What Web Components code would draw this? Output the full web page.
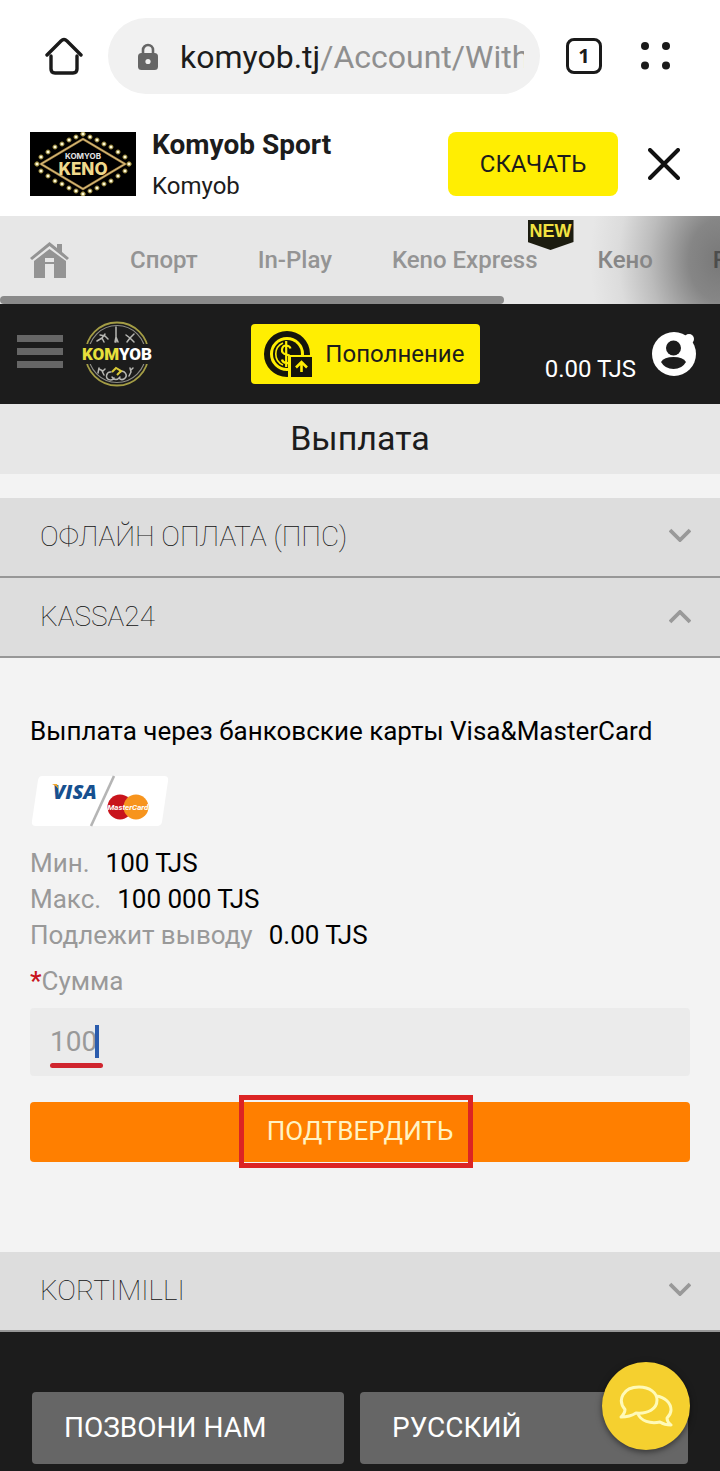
<!DOCTYPE html>
<html lang="ru">
<head>
<meta charset="utf-8">
<meta name="viewport" content="width=device-width, initial-scale=1">
<title>Выплата – Komyob</title>
<style>
  html, body { margin: 0; }
  body { background: #f3f3f3; color: #1c1c1c; font-family: Roboto, "Liberation Sans", sans-serif; }
</style>
</head>
<body>
<komyob-page></komyob-page>

<script>
  const reset = `
    * { box-sizing: border-box; }
    button { font: inherit; color: inherit; background: none; border: 0; margin: 0; padding: 0; cursor: pointer; }
    a { color: inherit; text-decoration: none; }
    svg { display: block; flex: none; }
  `;

  function define(name, css, html, setup) {
    const template = document.createElement('template');
    template.innerHTML = `<style>${reset}${css}</style>${html}`;
    customElements.define(name, class extends HTMLElement {
      constructor() {
        super();
        this.attachShadow({ mode: 'open' }).append(template.content.cloneNode(true));
      }
      connectedCallback() { if (setup) setup(this, this.shadowRoot); }
    });
  }

  /* Browser toolbar */
  define('browser-bar', `
    :host { display: flex; align-items: center; padding: 18px 44px 22px; background: #fff; }
    .url { flex: 1; min-width: 0; height: 76px; margin: 0 26px 0 24px; padding: 2px 16px 0 30px; border-radius: 38px;
           background: #f1f1f1; display: flex; align-items: center; gap: 22px; font-size: 32px; line-height: 40px; }
    .address { overflow: hidden; white-space: nowrap; text-align: left; flex: 1; }
    .path { color: #8f8f8f; }
    .tabs { width: 36px; height: 36px; border: 3px solid #1a1a1a; border-radius: 8px; font: 700 20px/30px "Noto Sans", sans-serif; text-align: center; }
    .menu { margin-left: 38px; }
  `, `
    <button aria-label="Домой"><svg width="40" height="40" viewBox="0 0 40 40" fill="none" stroke="#1a1a1a" stroke-width="3.4" stroke-linecap="round" stroke-linejoin="round"><path d="M3 19 17 5q3-3 6 0l14 14"/><path d="M7 20v13q0 4 4 4h18q4 0 4-4V20"/></svg></button>
    <button class="url">
      <svg width="20" height="28" viewBox="0 0 20 28"><path d="M5 12V7a5 5 0 0 1 10 0v5" fill="none" stroke="#666" stroke-width="2.6"/><rect y="10" width="20" height="17" rx="3.5" fill="#666"/><circle cx="10" cy="18.500" r="2.600" fill="#f1f1f1"/></svg>
      <span class="address">komyob.tj<span class="path">/Account/With</span></span>
    </button>
    <button class="tabs" aria-label="Вкладки">1</button>
    <button class="menu" aria-label="Меню"><svg width="36" height="32" viewBox="0 0 36 32" fill="#1a1a1a"><circle cx="5" cy="6" r="4"/><circle cx="26" cy="6" r="4"/><circle cx="5" cy="25.500" r="4"/><circle cx="26" cy="25.500" r="4"/></svg></button>
  `);

  /* Neon sign of the Keno game */
  define('keno-logo', `:host { display: block; }`, `
    <svg width="106" height="64" viewBox="0 0 106 64">
      <rect width="106" height="64" fill="#000"/>
      <path d="M53 7 95 32 53 57 11 32Z" fill="none" stroke="#a8874a" stroke-width="2.600" stroke-linejoin="round"/>
      <path d="M53 7 95 32 53 57 11 32Z" fill="none" stroke="#dcc07c" stroke-width="1" stroke-linejoin="round"/>
      <g id="bulbs" fill="#fffbd8" stroke="#857428" stroke-width="1"></g>
      <text x="53" y="27" text-anchor="middle" font-family="Inter, sans-serif" font-weight="700" font-size="8" fill="#e4e4e4">KOMYOB</text>
      <text x="53" y="43" text-anchor="middle" font-family="Inter, sans-serif" font-weight="800" font-size="17" fill="#f0d98c">KENO</text>
    </svg>
  `, (host, root) => {
    const group = root.getElementById('bulbs');
    const bulb = (x, y) => {
      const dot = document.createElementNS('http://www.w3.org/2000/svg', 'circle');
      dot.setAttribute('cx', x); dot.setAttribute('cy', y); dot.setAttribute('r', 2.1);
      group.append(dot);
    };
    const arm = [[0, 2], [7, 5], [14, 8], [21, 12], [28, 15], [35, 20], [42, 25], [46, 32]];
    for (const [dx, y] of arm) for (const side of [-1, 1]) { bulb(53 + side * dx, y); bulb(53 + side * dx, 64 - y); }
  });

  /* Install banner of the mobile app */
  define('app-banner', `
    :host { display: flex; align-items: center; padding: 12px 40px 16px 30px; background: #fff; }
    .text { flex: 1; margin-left: 16px; min-width: 0; }
    strong, span { display: block; }
    strong { font-size: 28px; line-height: 34px; font-weight: 700; }
    span { font-size: 24px; line-height: 28px; margin-top: 10px; }
    .get { width: 170px; height: 64px; border-radius: 8px; background: #ffee02; font-size: 24px; }
    .close { margin-left: 30px; }
  `, `
    <keno-logo></keno-logo>
    <div class="text"><strong>Komyob Sport</strong><span>Komyob</span></div>
    <button class="get">СКАЧАТЬ</button>
    <button class="close" aria-label="Закрыть"><svg width="32" height="32" viewBox="0 0 32 32" stroke="#111" stroke-width="4" stroke-linecap="round"><path d="M2 2 30 30M30 2 2 30"/></svg></button>
  `);

  /* Horizontally scrolled sections */
  define('section-nav', `
    :host { display: block; position: relative; overflow: hidden; color: #949494;
            background: radial-gradient(ellipse 130px 170px at 100% 50%, #787878 0, #868686 24%, #bcbcbc 54%, #dcdcdc 78%, #e7e7e7 100%) #e7e7e7; }
    nav { display: flex; align-items: center; gap: 60px; height: 80px; padding: 8px 30px 0; white-space: nowrap; font-size: 24px; line-height: 32px; font-weight: 500; }
    a { flex: none; position: relative; }
    .shaded { color: #868686; }
    .dark { color: #4c4c4c; }
    .badge { position: absolute; right: -36px; top: -24px; width: 46px; height: 30px; background: #1c1c10; color: #f3e341;
             clip-path: polygon(0 0, 100% 0, 100% 73%, 50% 100%, 0 73%); font: 700 18px/23px "Liberation Sans", sans-serif; text-align: center; }
    .track { height: 8px; }
    .thumb { width: 70%; height: 8px; background: #8a8a8a; border-radius: 4px; }
  `, `
    <nav>
      <a href="#home" aria-label="Главная"><svg width="40" height="36" viewBox="0 0 40 36" fill="#949494"><path d="M0 16 19.500 0 27 6V2h5v8l7 6-2 2L19.500 4 2 18Z"/><path d="M4 19 19.500 7 36 19v17H24V16h-9v20H4ZM15 20h9v2h-9Z"/></svg></a>
      <a href="#sport">Спорт</a>
      <a href="#inplay">In-Play</a>
      <a href="#express">Keno Express<span class="badge">NEW</span></a>
      <a href="#keno" class="shaded">Кено</a>
      <a href="#fast" class="dark">F</a>
    </nav>
    <div class="track"><div class="thumb"></div></div>
  `);

  /* Round emblem with athletes around the name */
  define('komyob-logo', `:host { display: block; }`, `
    <svg width="72" height="66" viewBox="0 0 72 66">
      <circle cx="36" cy="33" r="31.500" fill="none" stroke="#a49d45" stroke-width="1.800"/>
      <circle cx="36" cy="33" r="28.500" fill="none" stroke="#8d8d87" stroke-width="1.200"/>
      <g fill="none" stroke="#b7b7b3" stroke-width="1.500" stroke-linecap="round" stroke-linejoin="round">
        <path d="m16 20 5-3 3-4M19 14l5 1 3 3M21 17l2 4M35 6v9M35 11v10M34 21l1-5 2 5M45 14l4 3 4-4M49 17l-3 4M49 17l4 4"/>
        <path d="m18 47-1 5M18 48l4 2 2-2M21 50l2 4M49 47l1 4-2 4M50 49l2-2"/>
        <path d="M30 51a4 4 0 1 0 3 6M39 51a4 4 0 1 1-1 6M31 56q4 5 8 0"/>
      </g>
      <path d="m31 51 4-4 5 3-4 4" fill="none" stroke="#d8c936" stroke-width="2"/>
      <rect x="1" y="23" width="70" height="20" fill="#1c1c1c"/>
      <text x="36" y="39" text-anchor="middle" font-family="Roboto, sans-serif" font-weight="900" font-size="17" fill="#e7e03c">KOM<tspan fill="#fff">YOB</tspan></text>
    </svg>
  `);

  /* Site header with the account balance */
  define('site-header', `
    :host { display: flex; align-items: center; height: 100px; padding: 0 24px 0 17px; background: #1c1c1c; color: #fff; }
    .menu { display: grid; gap: 6px; width: 46px; margin-top: -6px; }
    .menu i { height: 7px; background: #666; }
    komyob-logo { margin: 0 auto 0 18px; }
    .deposit { display: flex; align-items: center; gap: 12px; height: 60px; margin-left: 34px; padding: 0 16px 0 12px; border-radius: 4px;
               background: #ffee02; color: #1c1c1c; font-size: 24px; }
    .balance { margin: 30px 16px 0 auto; font-size: 24px; line-height: 32px; }
  `, `
    <button class="menu" aria-label="Меню"><i></i><i></i><i></i></button>
    <komyob-logo></komyob-logo>
    <button class="deposit">
      <svg width="50" height="48" viewBox="0 0 50 48"><circle cx="24" cy="24" r="20" fill="none" stroke="#15150c" stroke-width="6"/><circle cx="24" cy="24" r="14" fill="#15150c"/><path d="M20 13a12 12 0 0 0 0 22" fill="none" stroke="#ffee02" stroke-width="1.600"/><path d="M27.500 18.500q-1-3-4.500-3t-4 4 4.500 5 4.500 5-4.500 3.500-4.500-3.500M23.200 11v26" fill="none" stroke="#ffee02" stroke-width="2.200"/><path d="M25 25H50V48H25Z" fill="#ffee02"/><rect x="28" y="27" width="21" height="20" fill="#15150c"/><path d="M38.500 42v-9M33 37.500l5.500-5.500 5.500 5.500" fill="none" stroke="#ffee02" stroke-width="2.600"/></svg>
      Пополнение
    </button>
    <span class="balance">0.00 TJS</span>
    <button aria-label="Профиль"><svg width="44" height="44" viewBox="0 0 44 44"><circle cx="22" cy="22" r="22" fill="#fff"/><circle cx="37" cy="7" r="5" fill="#fff"/><circle cx="21.500" cy="16" r="7.500" fill="#1c1c1c"/><path d="M9 30q3-5 12.500-5T34 30q-4 7-12.500 7T9 30Z" fill="#1c1c1c"/></svg></button>
  `);

  /* One payment method; its form shows while the item is open */
  define('payment-method', `
    :host { display: block; }
    .head { display: flex; align-items: center; justify-content: space-between; width: 100%; height: 80px; padding: 0 29px 0 40px;
            background: #ddd; border-bottom: 2px solid #979797; font-size: 28px; line-height: 36px; font-weight: 100; text-align: left; color: #111; }
    svg { margin-bottom: 4px; }
    :host([open]) svg { transform: rotate(180deg); margin-bottom: 0; }
    .body { display: none; }
    :host([open]) .body { display: block; }
  `, `
    <button class="head"><slot name="title"></slot><svg width="22" height="14" viewBox="0 0 22 14" fill="none" stroke="#999" stroke-width="3.800"><path d="m1 2 10 10L21 2"/></svg></button>
    <div class="body"><slot></slot></div>
  `, (host, root) => {
    root.querySelector('.head').onclick = () => host.toggleAttribute('open');
  });

  define('card-brands', `:host { display: block; }`, `
    <svg width="140" height="52" viewBox="0 0 140 52">
      <path d="M12 1H134q5 0 4 5l-6 41q-1 4-5 4H6q-5 0-4-5L8 5q1-4 4-4Z" fill="#fff"/>
      <path d="M84 1 61 51" stroke="#b5b5b5" stroke-width="2.600"/>
      <text x="23" y="24" font-family="'Open Sans', sans-serif" font-weight="800" font-style="italic" font-size="20" fill="#17508f">VISA</text>
      <path d="m22 9 5 0 2 6q-2-4-7-6Z" fill="#f0a72c"/>
      <circle cx="90" cy="32" r="12.500" fill="#c8141c"/><circle cx="106" cy="32" r="12.500" fill="#f7941d"/>
      <text x="98" y="35" text-anchor="middle" font-family="Roboto, sans-serif" font-weight="700" font-style="italic" font-size="8" fill="#fff">MasterCard</text>
    </svg>
  `);

  define('withdraw-form', `
    :host { display: block; padding: 55px 30px 90px; font-size: 26px; line-height: 36px; color: #000; }
    p, dl, dd { margin: 0; }
    card-brands { margin: 26px 0 18px; }
    dl div { display: flex; gap: 16px; }
    dt, label { color: #999; }
    label { display: block; margin: 10px 0 9px; }
    label b { color: #c8141c; font-weight: 500; }
    .field { position: relative; }
    input { display: block; width: 100%; height: 68px; padding: 0 20px 2px; border: 0; border-radius: 4px; background: #ebebeb;
            color: #999; font: inherit; font-size: 28px; outline: 0; }
    .caret { position: absolute; left: 65px; top: 17px; width: 4px; height: 33px; background: #2b5cad; }
    .underline { position: absolute; left: 20px; top: 55px; width: 53px; height: 5px; border-radius: 3px; background: #d0252e; }
    .action { position: relative; margin-top: 26px; }
    .submit { display: block; width: 100%; height: 60px; padding-bottom: 2px; border-radius: 4px; background: #ff7f00; color: #fff3c4; }
    .mark { position: absolute; left: 50%; top: -7px; width: 234px; height: 73px; margin-left: -121px; border: 5px solid #dc2424; pointer-events: none; }
  `, `
    <p>Выплата через банковские карты Visa&amp;MasterCard</p>
    <card-brands></card-brands>
    <dl>
      <div><dt>Мин.</dt><dd>100 TJS</dd></div>
      <div><dt>Макс.</dt><dd>100 000 TJS</dd></div>
      <div><dt>Подлежит выводу</dt><dd>0.00 TJS</dd></div>
    </dl>
    <label for="amount"><b>*</b>Сумма</label>
    <div class="field"><input id="amount" type="text" inputmode="numeric" value="100"><span class="caret"></span><span class="underline"></span></div>
    <div class="action"><button class="submit">ПОДТВЕРДИТЬ</button><span class="mark"></span></div>
  `);

  define('site-footer', `
    :host { display: grid; grid-template-columns: 39fr 41fr; gap: 16px; position: relative; padding: 60px 32px 7px; background: #1c1c1c; color: #fff; }
    .link { height: 72px; padding: 0 32px 2px; border-radius: 4px; background: #666; text-align: left; font-size: 28px; }
    .chat { position: absolute; right: 30px; top: 30px; width: 88px; height: 88px; border-radius: 50%; background: #f5d02f; box-shadow: 0 2px 6px rgba(0,0,0,.5); display: grid; place-items: center; }
  `, `
    <button class="link">ПОЗВОНИ НАМ</button>
    <button class="link">РУССКИЙ</button>
    <button class="chat" aria-label="Чат"><svg width="54" height="42" viewBox="0 0 54 42" fill="none" stroke="#fffab8" stroke-width="3" stroke-linejoin="round"><path d="M6 24.500C-2 15 4 2 20 2c11 0 18 6 18 13 0 9-9 14-21 13q-6 4-15 4 4-4 4-7.500Z"/><path d="M37 11c9 1 15 7 15 14 0 4-2 6-4 8 0 4 2 5 4 7-5 0-8-1-11-3-10 2-19-1-22-8"/></svg></button>
  `);

  define('komyob-page', `
    :host { display: block; }
    h1 { margin: 0 0 24px; padding-bottom: 2px; background: #e7e7e7; font-size: 34px; line-height: 68px; font-weight: 400; text-align: center; }
  `, `
    <browser-bar></browser-bar>
    <app-banner></app-banner>
    <section-nav></section-nav>
    <site-header></site-header>
    <main>
      <h1>Выплата</h1>
      <payment-method><span slot="title">ОФЛАЙН ОПЛАТА (ППС)</span></payment-method>
      <payment-method open><span slot="title">KASSA24</span><withdraw-form></withdraw-form></payment-method>
      <payment-method><span slot="title">KORTIMILLI</span></payment-method>
    </main>
    <site-footer></site-footer>
  `);
</script>
</body>
</html>
